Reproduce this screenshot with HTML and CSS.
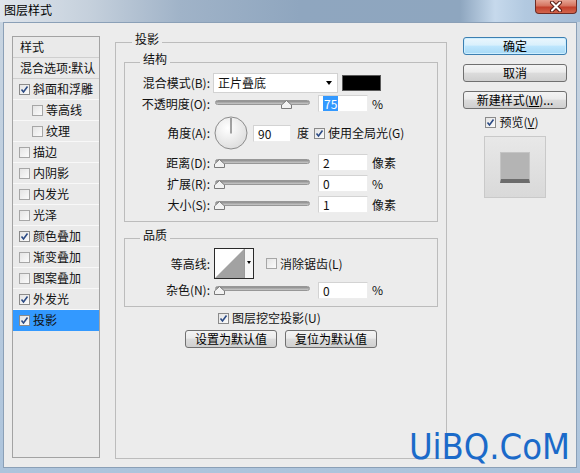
FILE: index.html
```html
<!DOCTYPE html>
<html lang="zh-CN">

<head>
    <meta charset="UTF-8">
    <link rel="stylesheet" href="styles.css">
    <title>图层样式</title>
</head>

<body>
    <div class="window">
        <div class="titlebar">
            <span class="title">图层样式</span>
            <span class="close">
                <svg width="14" height="11" viewBox="0 0 14 11">
                    <path d="M3 1.5l8 8M11 1.5l-8 8" stroke="#5b1d16" stroke-width="4" stroke-linecap="round" />
                    <path d="M3 1.5l8 8M11 1.5l-8 8" stroke="#fff" stroke-width="2" stroke-linecap="round" />
                </svg>
            </span>
        </div>

        <div class="dialog">
            <ul class="styles">
                <li class="head">样式</li>
                <li class="head">混合选项:默认</li>
                <li><span class="cb on"><svg viewBox="0 0 9 9"><path d="M1.5 4.5l2 2.5 4-5.5" /></svg></span>斜面和浮雕</li>
                <li class="sub"><span class="cb"></span>等高线</li>
                <li class="sub"><span class="cb"></span>纹理</li>
                <li><span class="cb"></span>描边</li>
                <li><span class="cb"></span>内阴影</li>
                <li><span class="cb"></span>内发光</li>
                <li><span class="cb"></span>光泽</li>
                <li><span class="cb on"><svg viewBox="0 0 9 9"><path d="M1.5 4.5l2 2.5 4-5.5" /></svg></span>颜色叠加</li>
                <li><span class="cb"></span>渐变叠加</li>
                <li><span class="cb"></span>图案叠加</li>
                <li><span class="cb on"><svg viewBox="0 0 9 9"><path d="M1.5 4.5l2 2.5 4-5.5" /></svg></span>外发光</li>
                <li class="active"><span class="cb on"><svg viewBox="0 0 9 9"><path d="M1.5 4.5l2 2.5 4-5.5" /></svg></span>投影</li>
            </ul>

            <fieldset class="panel">
                <legend>投影</legend>

                <fieldset class="group">
                    <legend>结构</legend>
                    <div class="row">
                        <span class="lbl">混合模式(B):</span>
                        <div class="select">正片叠底<span class="arrow"></span></div>
                        <div class="swatch"></div>
                    </div>
                    <div class="row">
                        <span class="lbl">不透明度(O):</span>
                        <div class="slider">
                            <span class="track"></span>
                            <svg class="thumb" style="left: 67px" width="11" height="9" viewBox="0 0 11 9"><path d="M0.5 8.5V5L5.5 0.5 10.5 5v3.5z" /></svg>
                        </div>
                        <div class="field"><span class="sel">75</span></div>
                        <span class="unit">%</span>
                    </div>
                    <div class="row tall">
                        <span class="lbl">角度(A):</span>
                        <svg class="dial" width="34" height="34" viewBox="0 0 34 34">
                            <defs>
                                <radialGradient id="dialfill" cx="40%" cy="35%" r="70%">
                                    <stop offset="0" stop-color="#ffffff" />
                                    <stop offset="1" stop-color="#dcdcdc" />
                                </radialGradient>
                            </defs>
                            <circle cx="17" cy="17" r="16" fill="url(#dialfill)" stroke="#8c8c8c" />
                            <line x1="17" y1="17.5" x2="17" y2="2" stroke="#4a4a4a" />
                        </svg>
                        <div class="field short">90</div>
                        <span class="unit deg">度</span>
                        <span class="cb on global"><svg viewBox="0 0 9 9"><path d="M1.5 4.5l2 2.5 4-5.5" /></svg></span>
                        <span class="cb-text">使用全局光(G)</span>
                    </div>
                    <div class="row">
                        <span class="lbl">距离(D):</span>
                        <div class="slider"><span class="track"></span><svg class="thumb" width="11" height="9" viewBox="0 0 11 9"><path d="M0.5 8.5V5L5.5 0.5 10.5 5v3.5z" /></svg></div>
                        <div class="field">2</div>
                        <span class="unit">像素</span>
                    </div>
                    <div class="row">
                        <span class="lbl">扩展(R):</span>
                        <div class="slider"><span class="track"></span><svg class="thumb" width="11" height="9" viewBox="0 0 11 9"><path d="M0.5 8.5V5L5.5 0.5 10.5 5v3.5z" /></svg></div>
                        <div class="field">0</div>
                        <span class="unit">%</span>
                    </div>
                    <div class="row">
                        <span class="lbl">大小(S):</span>
                        <div class="slider"><span class="track"></span><svg class="thumb" width="11" height="9" viewBox="0 0 11 9"><path d="M0.5 8.5V5L5.5 0.5 10.5 5v3.5z" /></svg></div>
                        <div class="field">1</div>
                        <span class="unit">像素</span>
                    </div>
                </fieldset>

                <fieldset class="group quality">
                    <legend>品质</legend>
                    <div class="row contour-row">
                        <span class="lbl">等高线:</span>
                        <div class="contour">
                            <svg width="29" height="29" viewBox="0 0 29 29"><polygon points="0,29 29,0 29,29" fill="#a2a2a2" /></svg>
                            <span class="c-drop"><span class="arrow"></span></span>
                        </div>
                        <span class="cb aa"></span>
                        <span class="cb-text">消除锯齿(L)</span>
                    </div>
                    <div class="row noise">
                        <span class="lbl">杂色(N):</span>
                        <div class="slider"><span class="track"></span><svg class="thumb" width="11" height="9" viewBox="0 0 11 9"><path d="M0.5 8.5V5L5.5 0.5 10.5 5v3.5z" /></svg></div>
                        <div class="field">0</div>
                        <span class="unit">%</span>
                    </div>
                </fieldset>

                <div class="knockout">
                    <span class="cb on"><svg viewBox="0 0 9 9"><path d="M1.5 4.5l2 2.5 4-5.5" /></svg></span>
                    <span class="cb-text">图层挖空投影(U)</span>
                </div>
                <div class="defaults">
                    <button class="btn">设置为默认值</button>
                    <button class="btn">复位为默认值</button>
                </div>
            </fieldset>

            <div class="side">
                <button class="btn primary">确定</button>
                <button class="btn">取消</button>
                <button class="btn">新建样式(<u>W</u>)...</button>
                <div class="preview-check">
                    <span class="cb on"><svg viewBox="0 0 9 9"><path d="M1.5 4.5l2 2.5 4-5.5" /></svg></span>
                    <span class="cb-text">预览(<u>V</u>)</span>
                </div>
                <div class="preview">
                    <div class="swatch-preview"></div>
                </div>
            </div>
        </div>

        <div class="watermark">UiBQ.CoM</div>
    </div>
</body>

</html>
```

FILE: styles.css
```css
* {
    margin: 0;
    padding: 0;
    box-sizing: border-box;
}

body {
    width: 580px;
    height: 473px;
    overflow: hidden;
    font-family: "Noto Sans CJK SC", sans-serif;
    font-size: 12px;
    line-height: 14px;
    color: #111;
}

.window {
    position: relative;
    height: 100%;
    display: flex;
    flex-direction: column;
    background: linear-gradient(to bottom, #c9d5e1, #adc4dc);
}

/* title bar */
.titlebar {
    height: 22px;
    display: flex;
    align-items: flex-start;
    background: linear-gradient(90deg, #dfe5ec 0px, #c5d0dc 90px, #a0b3c8 180px, #8fa6bf 300px, #8ea6bf 460px, #c6d9ec 495px, #b2c9e0 525px, #a3bcd6 580px);
}

.title {
    padding-left: 4px;
    line-height: 20px;
    color: #000;
}

.close {
    margin-left: auto;
    margin-right: 3px;
    width: 42px;
    height: 14px;
    display: flex;
    align-items: center;
    justify-content: center;
    border: 1px solid #6e2c25;
    border-top: none;
    border-radius: 0 0 4px 4px;
    background: linear-gradient(to bottom, #e6a494, #d5735f 45%, #c2402c 55%, #d2654c);
}

/* dialog body */
.dialog {
    flex: 1;
    display: flex;
    margin: 0 3px 5px;
    padding: 9px 9px 8px 8px;
    background: #ececec;
    border: 1px solid #8ba0b7;
}

.styles {
    list-style: none;
    width: 88px;
    flex: none;
    margin: 4px 0 1px;
    border: 1px solid #a3a3a3;
    background: #eaeaea;
}

.styles li {
    height: 21px;
    display: flex;
    align-items: center;
    padding-left: 6px;
    white-space: nowrap;
    border-bottom: 1px solid #f8f8f8;
}

.styles li.head {
    padding-left: 7px;
    border-bottom-color: #cfcfcf;
}

.styles li.sub {
    padding-left: 19px;
}

.styles li.active {
    background: #3399ff;
    border-bottom-color: #3399ff;
}

.styles .cb {
    margin-right: 3px;
}

/* checkbox */
.cb {
    display: inline-block;
    flex: none;
    width: 11px;
    height: 11px;
    border: 1px solid #a6a6a6;
    background: linear-gradient(135deg, #e4e4e4, #fbfbfb);
}

.cb.on {
    border-color: #8a8a8a;
}

.cb svg {
    display: block;
    width: 9px;
    height: 9px;
}

.cb path {
    fill: none;
    stroke: #2b4a84;
    stroke-width: 1.6;
}

.cb-text {
    margin-left: 3px;
    white-space: nowrap;
}

/* group boxes */
fieldset {
    min-width: 0;
    border: 1px solid #bcbcbc;
}

legend {
    padding: 0 3px 6px;
    line-height: 14px;
}

.panel {
    flex: 1;
    margin-left: 15px;
    padding: 0 8px;
}

.panel > legend {
    margin-left: 8px;
}

.group {
    padding: 0 0 6px;
}

.group > legend {
    margin-left: 15px;
}

.quality {
    margin-top: 6px;
    padding-bottom: 5px;
}

.row {
    height: 21px;
    display: flex;
    align-items: center;
}

.row.tall {
    height: 38px;
}

.contour-row {
    height: 31px;
}

.row.noise {
    height: 22px;
}

.lbl {
    width: 85px;
    flex: none;
    text-align: right;
    white-space: nowrap;
}

.select {
    width: 125px;
    height: 20px;
    margin-left: 3px;
    padding-left: 4px;
    display: flex;
    align-items: center;
    background: #fff;
    border: 1px solid #d2d2d2;
}

.arrow {
    margin-left: auto;
    margin-right: 5px;
    border-top: 4px solid #000;
    border-left: 3.5px solid transparent;
    border-right: 3.5px solid transparent;
}

.swatch {
    width: 39px;
    height: 16px;
    margin-left: 4px;
    background: #000;
    border: 1px solid #5a5a5a;
}

.slider {
    position: relative;
    width: 101px;
    height: 12px;
    margin-left: 4px;
    flex: none;
}

.track {
    position: absolute;
    left: 1px;
    right: 5px;
    top: 2px;
    height: 5px;
    border-radius: 3px;
    border: 1px solid #979797;
    background: linear-gradient(to bottom, #8c8c8c, #c9c9c9);
}

.thumb {
    position: absolute;
    left: 0;
    top: 2px;
}

.thumb path {
    fill: #f2f2f2;
    stroke: #7a7a7a;
}

.field {
    width: 50px;
    height: 17px;
    margin-left: 3px;
    padding-left: 4px;
    line-height: 15px;
    background: #fff;
    border: 1px solid;
    border-color: #d3d3d3 #ededed #ededed #d3d3d3;
}

.field.short {
    width: 38px;
    margin-left: 5px;
}

.sel {
    display: inline-block;
    padding: 0 1px;
    background: #3399ff;
    color: #fff;
}

.unit {
    margin-left: 4px;
}

.unit.deg {
    margin-left: 6px;
}

.dial {
    margin-left: 4px;
    flex: none;
}

.global {
    margin-left: 5px;
}

.contour {
    width: 40px;
    height: 31px;
    margin-left: 4px;
    display: flex;
    border: 1px solid #2a2a2a;
    background: #fff;
}

.contour svg {
    display: block;
}

.c-drop {
    flex: 1;
    display: flex;
    justify-content: center;
    padding-top: 12px;
    border-left: 1px solid #9a9a9a;
    background: #f6f6f6;
}

.c-drop .arrow {
    margin: 0;
    border-top-width: 3px;
    border-left-width: 2.5px;
    border-right-width: 2.5px;
    height: 0;
}

.aa {
    margin-left: 12px;
}

.knockout {
    height: 20px;
    margin-top: 1px;
    padding-left: 94px;
    display: flex;
    align-items: center;
}

.defaults {
    margin-top: 2px;
    display: flex;
    justify-content: center;
    gap: 8px;
}

/* buttons */
.btn {
    height: 18px;
    font: inherit;
    line-height: 14px;
    color: #000;
    border: 1px solid #707070;
    border-radius: 3px;
    background: linear-gradient(to bottom, #f4f4f4, #ebebeb 45%, #dcdcdc 50%, #cfcfcf);
}

.defaults .btn {
    width: 92px;
}

.side {
    width: 104px;
    flex: none;
    margin: 5px 0 0 16px;
    display: flex;
    flex-direction: column;
}

.side .btn {
    width: 104px;
    margin-bottom: 9px;
}

.btn.primary {
    border-color: #3c7fb1;
    background: linear-gradient(to bottom, #eaf6fd, #d9f0fc 45%, #bee6fd 50%, #a7d9f5);
    box-shadow: inset 0 0 0 1px #cdeeff;
}

.preview-check {
    height: 20px;
    margin-top: -6px;
    display: flex;
    align-items: center;
    justify-content: center;
    padding-right: 6px;
}

.preview {
    width: 62px;
    height: 62px;
    margin: 4px auto 0;
    display: flex;
    align-items: center;
    justify-content: center;
    border: 1px solid #c9c9c9;
    background: linear-gradient(to bottom, #e8e8e8, #d9d9d9);
}

.swatch-preview {
    width: 30px;
    height: 31px;
    border: 1px solid #c4c4c4;
    border-bottom: 4px solid #6c6c6c;
    background: #b4b4b4;
}

.watermark {
    position: absolute;
    right: 10px;
    bottom: 8px;
    font-family: "DejaVu Sans Condensed", "DejaVu Sans", sans-serif;
    font-stretch: condensed;
    font-size: 36px;
    line-height: 36px;
    color: #1b6ac9;
}
```
